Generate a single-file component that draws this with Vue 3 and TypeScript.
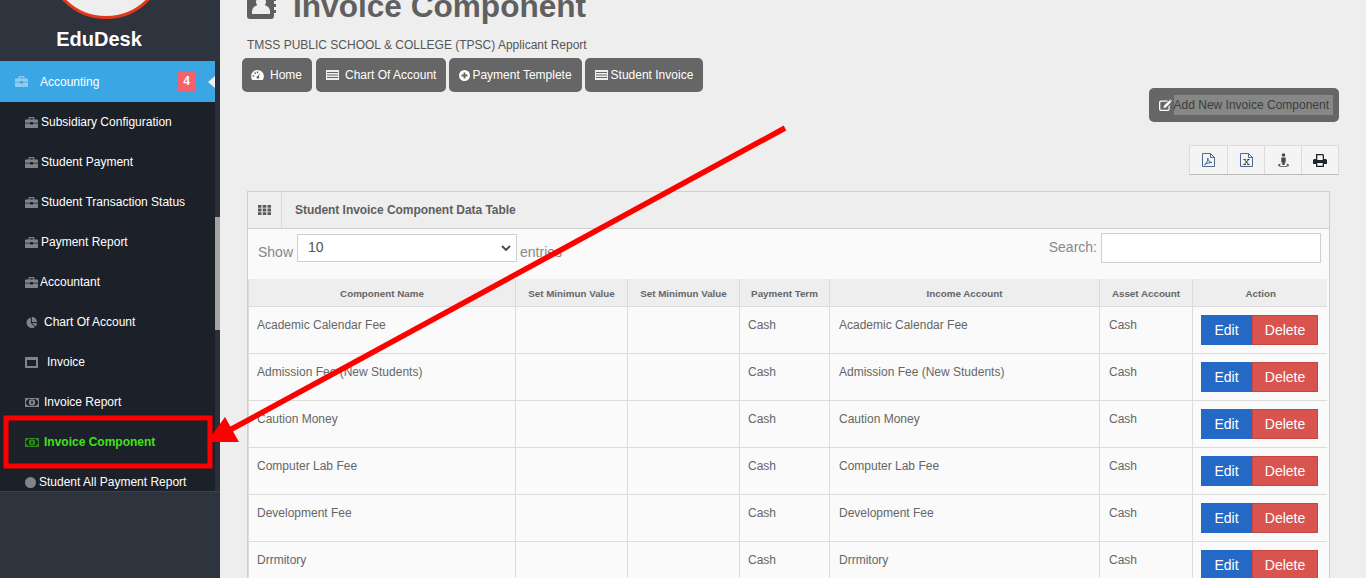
<script setup lang="ts">
type MenuItem = { label: string; icon: string; gap: number; active?: boolean };

const menu: MenuItem[] = [
  { label: "Subsidiary Configuration", icon: "case", gap: 3 },
  { label: "Student Payment", icon: "case", gap: 3 },
  { label: "Student Transaction Status", icon: "case", gap: 3 },
  { label: "Payment Report", icon: "case", gap: 3 },
  { label: "Accountant", icon: "case", gap: 2 },
  { label: "Chart Of Account", icon: "pie", gap: 6 },
  { label: "Invoice", icon: "window", gap: 9 },
  { label: "Invoice Report", icon: "money", gap: 5 },
  { label: "Invoice Component", icon: "money", gap: 5, active: true },
  { label: "Student All Payment Report", icon: "dot", gap: 3 },
];

const navButtons = [
  { label: "Home", icon: "gauge", gap: 6 },
  { label: "Chart Of Account", icon: "list", gap: 6 },
  { label: "Payment Templete", icon: "plus", gap: 2 },
  { label: "Student Invoice", icon: "list", gap: 3 },
];

const columns = [
  "Component Name",
  "Set Minimun Value",
  "Set Minimun Value",
  "Payment Term",
  "Income Account",
  "Asset Account",
  "Action",
];

const rows = [
  "Academic Calendar Fee",
  "Admission Fee (New Students)",
  "Caution Money",
  "Computer Lab Fee",
  "Development Fee",
  "Drrmitory",
];
</script>

<template>
  <div class="page">
    <aside class="sidebar">
      <div class="brand">
        <div class="logo"></div>
        <div class="brand-name">EduDesk</div>
      </div>
      <div class="menu-wrap">
        <nav class="menu">
          <div class="menu-head">
            <svg class="head-icon" viewBox="0 0 13 11"><path d="M3.500 2.500V1.200C3.500.5 4 0 4.700 0h3.600c.7 0 1.200.5 1.200 1.200v1.300H8.300V1.200H4.700v1.300zM1 2.500h11c.6 0 1 .4 1 1v2.300H8V5H5v.8H0V3.500c0-.6.4-1 1-1zM0 6.600h5v1h3v-1h5V10c0 .6-.4 1-1 1H1c-.6 0-1-.4-1-1z" /></svg>
            <span class="head-label">Accounting</span>
            <span class="badge">4</span>
            <span class="caret"></span>
          </div>
          <div
            v-for="item in menu"
            :key="item.label"
            class="menu-item"
            :class="{ active: item.active }"
            :style="{ gap: item.gap + 'px' }"
          >
            <svg v-if="item.icon === 'case'" class="mi" viewBox="0 0 13 11"><path d="M3.500 2.500V1.200C3.500.5 4 0 4.700 0h3.600c.7 0 1.200.5 1.200 1.200v1.300H8.300V1.200H4.700v1.300zM1 2.500h11c.6 0 1 .4 1 1v2.300H8V5H5v.8H0V3.500c0-.6.4-1 1-1zM0 6.600h5v1h3v-1h5V10c0 .6-.4 1-1 1H1c-.6 0-1-.4-1-1z" /></svg>
            <svg v-else-if="item.icon === 'pie'" class="mi" viewBox="0 0 13 13"><path d="M5.800.5v6.700l4.700 4.700A6.300 6.300 0 1 1 5.800.5zM7 0a6 6 0 0 1 6 6H7zM7.200 7.200H13a6 6 0 0 1-1.700 4.100z" /></svg>
            <svg v-else-if="item.icon === 'window'" class="mi" viewBox="0 0 13 11"><path fill-rule="evenodd" d="M0 0h13v11H0zM2 3v6h9V3z" /></svg>
            <svg v-else-if="item.icon === 'money'" class="mi wide" viewBox="0 0 14 9"><path fill-rule="evenodd" d="M0 0h14v9H0zM1 1v7h12V1z" /><path d="M1 1h2.500L1 3.200zM10.500 1H13v2.200zM1 5.800 3.500 8H1zM13 5.800V8h-2.500z" /><path fill-rule="evenodd" d="M7 1.300a3.200 3.200 0 1 1 0 6.400 3.200 3.200 0 0 1 0-6.400zM6.300 3v3h1.400V3z" /></svg>
            <svg v-else class="mi dot" viewBox="0 0 11 11"><circle cx="5.500" cy="5.500" r="5.500" /></svg>
            <span>{{ item.label }}</span>
          </div>
        </nav>
        <div class="scroll-track"><div class="scroll-thumb"></div></div>
      </div>
    </aside>

    <main class="content">
      <h1 class="title">
        <svg class="title-icon" viewBox="0 0 30 30"><path fill-rule="evenodd" d="M4 1h21a3 3 0 0 1 3 3v3h2v3h-2v3h2v3h-2v3h2v3h-2v3a3 3 0 0 1-3 3H4a3 3 0 0 1-3-3V4a3 3 0 0 1 3-3zM15 6a5 5 0 0 0-3.800 8.200C8.600 15 6 16.600 6 20.500V23h18v-2.500c0-3.900-2.600-5.500-5.200-6.300A5 5 0 0 0 15 6z" /></svg>
        <span>Invoice Component</span>
      </h1>
      <p class="subtitle">TMSS PUBLIC SCHOOL &amp; COLLEGE (TPSC) Applicant Report</p>

      <div class="nav-buttons">
        <a v-for="b in navButtons" :key="b.label" class="nav-btn" :style="{ gap: b.gap + 'px' }">
          <svg v-if="b.icon === 'gauge'" class="nb-icon gauge" viewBox="0 0 14 11"><path fill-rule="evenodd" d="M7 0a7 7 0 0 1 7 7c0 1.600-.5 3-1.300 4H1.300A6.800 6.800 0 0 1 0 7a7 7 0 0 1 7-7zM2.500 5.500a1 1 0 1 0 0 2 1 1 0 0 0 0-2zM4.500 2.500a1 1 0 1 0 0 2 1 1 0 0 0 0-2zM7 1.500a1 1 0 1 0 0 2 1 1 0 0 0 0-2zM10 3 7.400 6.500a1.500 1.500 0 1 0 1.200.6z" /></svg>
          <svg v-else-if="b.icon === 'list'" class="nb-icon list" viewBox="0 0 13 10"><path fill-rule="evenodd" d="M0 0h13v10H0zM1 2v1h11V2zM1 4.500v1h11v-1zM1 7v1h11V7z" /></svg>
          <svg v-else class="nb-icon plus" viewBox="0 0 11 11"><path fill-rule="evenodd" d="M5.500 0a5.500 5.500 0 1 1 0 11 5.500 5.500 0 0 1 0-11zM4.600 2.500v2.100H2.500v1.800h2.100v2.100h1.800V6.400h2.100V4.600H6.400V2.500z" /></svg>
          <span>{{ b.label }}</span>
        </a>
      </div>

      <div class="add-row">
        <a class="add-btn">
          <svg class="edit-icon" viewBox="0 0 13 12"><path d="M2 1.500h7L8 2.700H2.200a.9.900 0 0 0-.9.900v6.200c0 .5.400.9.900.9h6.400a.9.900 0 0 0 .9-.9V7.300l1.200-1.200v3.900A2 2 0 0 1 8.700 12H2a2 2 0 0 1-2-2V3.500a2 2 0 0 1 2-2z" /><path d="M5 6.800 10.500 1.300l1.700 1.700L6.700 8.500 4.500 9zM11 .8l.5-.5 1.500 1.500-.5.700z" /></svg>
          <span class="picked">Add New Invoice Component</span>
        </a>
      </div>

      <div class="tools-row">
        <div class="tools">
          <div class="tool">
            <svg viewBox="0 0 13 14" class="doc"><path d="M.5.500h8l4 4v9H.5zM8.500.5v4h4" /><path d="M2.500 11.800c2-1.200 3.500-4 3.300-6.800.3 2.800 1.700 4.200 4.200 4.500-2.800 0-5.300.7-7.500 2.300z" /></svg>
          </div>
          <div class="tool">
            <svg viewBox="0 0 13 14" class="doc"><path d="M.5.500h8l4 4v9H.5zM8.500.5v4h4" /><path class="x-mark" d="M3.500 6.500h2.200M7.300 6.500h2.200M4.400 6.500l4.200 5M8.600 6.500l-4.200 5M3.500 11.500h2.200M7.300 11.500h2.200" /></svg>
          </div>
          <div class="tool">
            <svg viewBox="0 0 13 14" class="person"><circle cx="6.500" cy="2" r="1.800" /><path d="M4.300 4.500h4.400v5h-1v2.500H5.300V9.500h-1z" /><path d="M3.500 10.500C1.800 11 1 11.500 1 12.200 1 13.200 3.500 14 6.500 14s5.500-.8 5.500-1.800c0-.7-.8-1.200-2.500-1.700v1c.6.200 1 .5 1 .7 0 .4-2 1-4 1s-4-.6-4-1c0-.2.400-.5 1-.7z" /></svg>
          </div>
          <div class="tool">
            <svg viewBox="0 0 14 13" class="printer"><path fill-rule="evenodd" d="M3 0h7l1 1v4h1.500A1.500 1.500 0 0 1 14 6.500V10h-3v3H3v-3H0V6.500A1.500 1.500 0 0 1 1.500 5H3zM4.300 1.300V6h5.400V1.300zM4.300 9v2.800h5.400V9z" /></svg>
          </div>
        </div>
      </div>

      <section class="panel">
        <header class="panel-head">
          <div class="grid-cell">
            <svg class="grid-icon" viewBox="0 0 13 10"><path d="M0 0h3.500v2.800H0zM4.700 0h3.600v2.800H4.700zM9.500 0H13v2.800H9.500zM0 3.600h3.500v2.800H0zM4.700 3.600h3.600v2.800H4.700zM9.500 3.600H13v2.800H9.500zM0 7.200h3.500V10H0zM4.700 7.200h3.600V10H4.700zM9.500 7.200H13V10H9.500z" /></svg>
          </div>
          <div class="panel-title">Student Invoice Component Data Table</div>
        </header>
        <div class="panel-body">
          <div class="filters">
            <label class="show">
              <span>Show</span>
              <span class="fake-select">10<svg class="chev" viewBox="0 0 10 6"><path d="M1 1l4 4 4-4" /></svg></span>
              <span>entries</span>
            </label>
            <label class="search">
              <span>Search:</span>
              <span class="search-input"></span>
            </label>
          </div>
          <table class="data">
            <colgroup>
              <col style="width: 267px" />
              <col style="width: 112px" />
              <col style="width: 112px" />
              <col style="width: 90px" />
              <col style="width: 270px" />
              <col style="width: 93px" />
              <col style="width: 134px" />
            </colgroup>
            <thead>
              <tr>
                <th v-for="(c, i) in columns" :key="i">{{ c }}</th>
              </tr>
            </thead>
            <tbody>
              <tr v-for="r in rows" :key="r">
                <td>{{ r }}</td>
                <td></td>
                <td></td>
                <td>Cash</td>
                <td class="shifted">{{ r }}</td>
                <td class="shifted">Cash</td>
                <td class="actions">
                  <a class="btn edit">Edit</a><a class="btn del">Delete</a>
                </td>
              </tr>
            </tbody>
          </table>
        </div>
      </section>
    </main>

    <svg class="annotation" width="1366" height="578" viewBox="0 0 1366 578">
      <rect x="6" y="418" width="204" height="48" fill="none" stroke="#ff0000" stroke-width="5" />
      <line x1="785" y1="128" x2="228" y2="431" stroke="#ff0000" stroke-width="5.500" />
      <polygon points="207,442 225,417 239,442" fill="#ff0000" />
    </svg>
  </div>
</template>

<style scoped>
.page {
  position: relative;
  display: flex;
  width: 1366px;
  height: 578px;
  overflow: hidden;
  background: #eeeeee;
  font-family: "Liberation Sans", Arial, sans-serif;
}

/* sidebar */
.sidebar {
  width: 220px;
  flex: none;
  background: #2d343e;
  overflow: hidden;
}
.brand {
  height: 61px;
  overflow: hidden;
}
.logo {
  width: 120px;
  height: 120px;
  margin: -101px 0 0 46px;
  box-sizing: border-box;
  background: #eeeeee;
  border: 3px solid #e5371b;
  border-radius: 50%;
}
.brand-name {
  margin: 8px 0 0 -22px;
  text-align: center;
  color: #fff;
  font-size: 20px;
  font-weight: 700;
  line-height: 24px;
}
.menu-wrap {
  display: flex;
  height: 430px;
  border-bottom: 1px solid #3a414b;
}
.menu {
  width: 215px;
  background: #1c2129;
  overflow: hidden;
}
.menu-head {
  position: relative;
  display: flex;
  align-items: center;
  height: 41px;
  background: #3aa7e4;
  color: #fff;
  font-size: 12px;
}
.head-icon {
  width: 13px;
  height: 11px;
  margin-left: 15px;
  fill: #8fcdf0;
}
.head-label {
  margin-left: 12px;
}
.badge {
  position: absolute;
  left: 178px;
  top: 11px;
  width: 17px;
  height: 19px;
  background: #f5616c;
  font-weight: 700;
  text-align: center;
  line-height: 19px;
}
.caret {
  position: absolute;
  right: 0;
  top: 15px;
  border-top: 6px solid transparent;
  border-bottom: 6px solid transparent;
  border-right: 7px solid #eeeeee;
}
.menu-item {
  display: flex;
  align-items: center;
  height: 40px;
  padding-left: 25px;
  color: #fff;
  font-size: 12px;
  white-space: nowrap;
}
.menu-item.active {
  color: #41e215;
  font-weight: 700;
}
.mi {
  width: 13px;
  height: 11px;
  flex: none;
  fill: #80838a;
}
.mi.wide {
  width: 14px;
  height: 9px;
}
.mi.dot {
  width: 11px;
}
.menu-item.active .mi {
  fill: #2c8c18;
}
.scroll-track {
  position: relative;
  width: 5px;
  background: #2a3039;
}
.scroll-thumb {
  position: absolute;
  top: 156px;
  left: 0;
  width: 5px;
  height: 113px;
  background: #a3a3a3;
}

/* main column */
.content {
  flex: 1;
  min-width: 0;
  padding: 0 27px 0 22px;
}
.title {
  display: flex;
  align-items: center;
  gap: 17px;
  height: 40px;
  margin: -14px 0 0 4px;
  color: #606060;
  font-size: 31.600px;
  font-weight: 700;
  white-space: nowrap;
}
.title-icon {
  width: 30px;
  height: 30px;
  fill: #5f5f5f;
  flex: none;
}
.subtitle {
  margin: 12px 0 0 5px;
  color: #555;
  font-size: 12px;
  line-height: 14px;
}
.nav-buttons {
  display: flex;
  gap: 3px;
  margin-top: 6px;
}
.nav-btn {
  display: flex;
  align-items: center;
  box-sizing: border-box;
  height: 34px;
  padding: 0 10px;
  background: #666;
  border-radius: 5px;
  color: #fff;
  font-size: 12px;
  white-space: nowrap;
}
.nav-btn:first-child {
  margin-right: 1px;
  padding-left: 9px;
}
.nb-icon {
  fill: #fff;
  flex: none;
}
.gauge {
  width: 13px;
  height: 10px;
}
.list {
  width: 13px;
  height: 10px;
  fill: #eee;
}
.plus {
  width: 11px;
  height: 11px;
}
.add-row {
  display: flex;
  justify-content: flex-end;
  margin-top: -4px;
}
.add-btn {
  display: flex;
  align-items: center;
  gap: 2px;
  box-sizing: border-box;
  height: 34px;
  padding: 0 6px 0 10px;
  background: #666;
  border-radius: 5px;
  color: #3d3d3d;
  font-size: 12px;
}
.edit-icon {
  width: 13px;
  height: 12px;
  fill: #fff;
  flex: none;
}
.picked {
  background: #878787;
  line-height: 20px;
  padding: 0 4px 0 0;
}
.tools-row {
  display: flex;
  justify-content: flex-end;
  margin-top: 23px;
}
.tools {
  display: flex;
  height: 30px;
  box-sizing: border-box;
  background: #f4f4f4;
  border: 1px solid #dcdcdc;
  border-bottom: 1px solid #bdbdbd;
}
.tool {
  display: flex;
  align-items: center;
  justify-content: center;
  box-sizing: border-box;
  width: 37px;
  border-left: 1px solid #dcdcdc;
}
.tool:first-child {
  border-left: 0;
}
.doc {
  width: 13px;
  height: 14px;
  fill: none;
  stroke: #4d6a8f;
  stroke-width: 1;
}
.x-mark {
  stroke: #333;
}
.person {
  width: 13px;
  height: 14px;
  fill: #4a4a4a;
}
.printer {
  width: 14px;
  height: 13px;
  fill: #1c2430;
}
.panel {
  width: 1083px;
  margin: 16px 0 0 5px;
  box-sizing: border-box;
  background: #fafafa;
  border: 1px solid #cfcfcf;
}
.panel-head {
  display: flex;
  height: 36px;
  background: #eeeeee;
  border-bottom: 1px solid #cfcfcf;
}
.grid-cell {
  display: flex;
  align-items: center;
  justify-content: center;
  width: 33px;
  border-right: 1px solid #d9d9d9;
}
.grid-icon {
  width: 13px;
  height: 10px;
  fill: #5a5a5a;
}
.panel-title {
  padding-left: 13px;
  color: #5f5f5f;
  font-size: 12px;
  font-weight: 700;
  letter-spacing: -0.050px;
  line-height: 36px;
}
.filters {
  display: flex;
  justify-content: space-between;
  height: 50px;
  color: #888;
  font-size: 14px;
}
.show {
  display: flex;
  align-items: flex-start;
  gap: 4px;
  padding: 5px 0 0 10px;
}
.show > span:first-child,
.show > span:last-child {
  margin-top: 10px;
  line-height: 16px;
}
.show > span:last-child {
  margin-left: -1px;
}
.fake-select {
  position: relative;
  box-sizing: border-box;
  width: 220px;
  height: 28px;
  padding-left: 10px;
  background: #fff;
  border: 1px solid #cfcfcf;
  color: #555;
  font-size: 14px;
  line-height: 25px;
}
.chev {
  position: absolute;
  top: 10px;
  right: 5px;
  width: 10px;
  height: 6px;
  fill: none;
  stroke: #444;
  stroke-width: 1.800;
}
.search {
  display: flex;
  align-items: flex-start;
  gap: 4px;
  padding: 4px 8px 0 0;
  line-height: 29px;
}
.search-input {
  box-sizing: border-box;
  width: 220px;
  height: 30px;
  background: #fff;
  border: 1px solid #cfcfcf;
}
.data {
  table-layout: fixed;
  width: 1078px;
  border-collapse: collapse;
  color: #666;
  font-size: 12px;
}
.data th {
  height: 27px;
  padding: 2px 0 0;
  box-sizing: border-box;
  background: #eeeeee;
  border-right: 1px solid #dcdcdc;
  border-bottom: 1px solid #dcdcdc;
  color: #666;
  font-size: 9.800px;
  font-weight: 700;
  text-align: center;
}
.data th:last-child {
  padding-left: 2px;
  border-right: 0;
}
.data td {
  height: 47px;
  padding: 11px 8px 0;
  box-sizing: border-box;
  vertical-align: top;
  line-height: 14px;
  border-right: 1px solid #dcdcdc;
  border-bottom: 1px solid #dcdcdc;
}
.data td.shifted {
  padding-left: 9px;
}
.data td:first-child,
.data th:first-child {
  border-left: 1px solid #dcdcdc;
}
.data td:last-child {
  border-right: 0;
}
.data td.actions {
  padding: 8px 0 0 8px;
  white-space: nowrap;
}
.btn {
  display: inline-block;
  box-sizing: border-box;
  height: 30px;
  color: #fff;
  font-size: 14px;
  line-height: 30px;
  text-align: center;
  vertical-align: top;
}
.edit {
  width: 51px;
  background: #2469c5;
}
.del {
  width: 66px;
  background: #d9534f;
  border: 1px solid #c64541;
  line-height: 28px;
}
.annotation {
  position: absolute;
  left: 0;
  top: 0;
  pointer-events: none;
}
</style>

<style>
html,
body {
  margin: 0;
  background: #eeeeee;
  overflow: hidden;
}
</style>
